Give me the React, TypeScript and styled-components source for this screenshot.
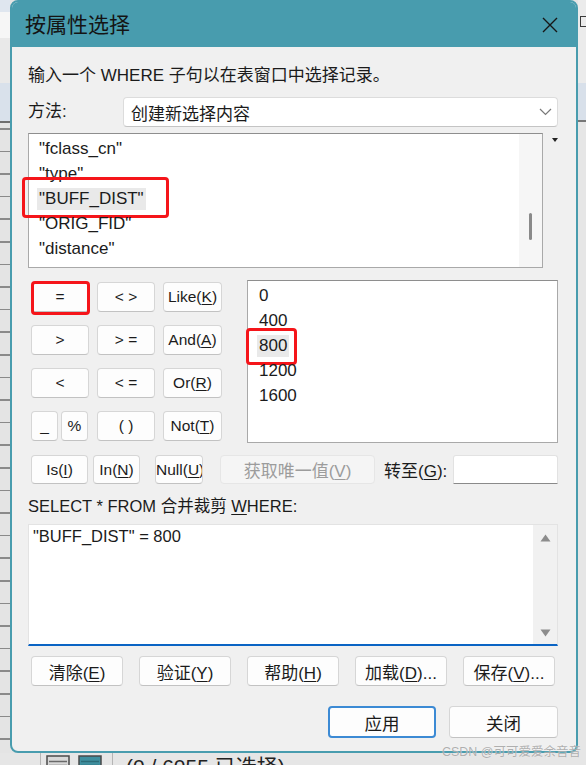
import styled, { createGlobalStyle } from "styled-components";

const sans = `"Liberation Sans", "Noto Sans CJK SC", sans-serif`;
const teal = "#489cae";

const GlobalStyle = createGlobalStyle`
  html, body {
    margin: 0;
    padding: 0;
    background: #e6e6e6;
  }
  body {
    font-family: ${sans};
    color: #1b1b1b;
  }
`;

const Desktop = styled.div`
  position: relative;
  display: grid;
  grid-template-columns: 10px 568px 8px;
  grid-template-rows: 753px 12px;
  width: 586px;
  height: 765px;
  overflow: hidden;
  background: #e4e4e4;
`;

const LeftPane = styled.div`
  background:
    linear-gradient(
      #dfe6ef 0 12px,
      #f6f6f6 12px 38px,
      #e9e9e9 38px 83px,
      #d9e1eb 83px 121px,
      #6e6e6e 121px 123px,
      transparent 123px
    ),
    repeating-linear-gradient(#e4e4e4 0 21px, #8a8a8a 21px 22.6px);
  background-position: 0 0, 0 -6px;
`;

const RightPane = styled.div`
  display: flex;
  flex-direction: column;
  background: linear-gradient(
    #ebebeb 0 83px,
    #d8e0ea 83px 120px,
    #777 120px 122px,
    #e6e6e6 122px
  );
`;

const RightIcon = styled.div`
  width: 10px;
  height: 9px;
  margin: 16px 0 0 2px;
  border: 1.5px solid #3a3a3a;
`;

const Dialog = styled.section`
  grid-column: 2;
  grid-row: 1;
  display: flex;
  flex-direction: column;
  box-sizing: border-box;
  background: #f0f0f0;
  border: 2px solid ${teal};
  border-radius: 8px;
  overflow: hidden;
`;

const TitleBar = styled.header`
  display: flex;
  align-items: center;
  justify-content: space-between;
  height: 45px;
  flex: none;
  padding: 0 18px 0 13px;
  background: ${teal};
`;

const Title = styled.h1`
  margin: 0;
  font-size: 21px;
  font-weight: 400;
  line-height: 28px;
  color: #141414;
`;

const Body = styled.div`
  display: flex;
  flex-direction: column;
  padding: 0 18px 0 16px;
`;

const Text = styled.div<{ $size?: number; $mt?: number }>`
  font-size: ${(p) => p.$size ?? 17}px;
  line-height: 24px;
  margin-top: ${(p) => p.$mt ?? 0}px;
  white-space: nowrap;
`;

const U = styled.span`
  text-decoration: underline;
  text-underline-offset: 2px;
`;

const MethodRow = styled.div`
  display: flex;
  align-items: center;
  margin-top: 9px;
  height: 30px;
`;

const MethodLabel = styled.div`
  width: 95px;
  font-size: 17px;
  line-height: 24px;
`;

const Combo = styled.div`
  flex: 1;
  display: flex;
  align-items: center;
  justify-content: space-between;
  height: 30px;
  box-sizing: border-box;
  padding: 0 5px 0 7px;
  background: #fff;
  border: 1px solid #dcdcdc;
  border-bottom-color: #c4c4c4;
  border-radius: 4px;
  font-size: 17px;
`;

const FieldRow = styled.div`
  display: flex;
  margin-top: 6px;
`;

const ListBox = styled.div<{ $w: number; $h: number }>`
  display: flex;
  width: ${(p) => p.$w}px;
  height: ${(p) => p.$h}px;
  box-sizing: border-box;
  background: #fff;
  border: 1px solid #a9a9a9;
  border-top-color: #8e8e8e;
`;

const Items = styled.div<{ $indent: number }>`
  flex: 1;
  padding: 2.5px 0 0 ${(p) => p.$indent}px;
  font-size: 17px;
`;

const Item = styled.div`
  display: flex;
  align-items: center;
  height: 25px;
`;

const ItemText = styled.span<{ $selected?: boolean }>`
  position: relative;
  padding: 0 2px;
  line-height: 22px;
  background: ${(p) => (p.$selected ? "#e9e9e9" : "transparent")};
`;

const ScrollTrack = styled.div<{ $w: number }>`
  display: flex;
  flex-direction: column;
  align-items: center;
  width: ${(p) => p.$w}px;
  background: #f6f6f6;
`;

const Thumb = styled.div`
  width: 3px;
  height: 27px;
  margin-top: 79px;
  border-radius: 2px;
  background: #8a8a8a;
`;

const TinyArrow = styled.div`
  margin: 5px 0 0 9px;
  width: 0;
  height: 0;
  border-left: 3px solid transparent;
  border-right: 3px solid transparent;
  border-top: 4px solid #222;
`;

const Marker = styled.div<{ $t: number; $r: number; $b: number; $l: number }>`
  position: absolute;
  top: ${(p) => p.$t}px;
  right: ${(p) => p.$r}px;
  bottom: ${(p) => p.$b}px;
  left: ${(p) => p.$l}px;
  border: 3.5px solid #f5151a;
  border-radius: 4px;
  pointer-events: none;
`;

const Middle = styled.div`
  display: flex;
  align-items: flex-start;
  margin-top: 12px;
  height: 163px;
`;

const OpGrid = styled.div`
  display: grid;
  grid-template-columns: 58px 58px 59px;
  grid-template-rows: repeat(4, 30px);
  column-gap: 8px;
  row-gap: 13px;
  margin: 2px 0 0 3px;
`;

const Pair = styled.div`
  display: flex;
  gap: 3px;
`;

const Btn = styled.button<{ $w?: number; $h?: number; $ml?: number; $size?: number; $primary?: boolean }>`
  position: relative;
  flex: none;
  width: ${(p) => (p.$w ? `${p.$w}px` : "100%")};
  height: ${(p) => p.$h ?? 30}px;
  margin-left: ${(p) => p.$ml ?? 0}px;
  padding: 0;
  box-sizing: border-box;
  background: #fdfdfd;
  border: ${(p) => (p.$primary ? "2px solid #3c8ad4" : "1px solid #d6d6d6")};
  border-bottom-color: ${(p) => (p.$primary ? "#3c8ad4" : "#c2c2c2")};
  border-radius: 4px;
  font-family: ${sans};
  font-size: ${(p) => p.$size ?? 15.5}px;
  color: #1b1b1b;
  white-space: nowrap;
  overflow: visible;
  cursor: default;
  &:disabled {
    background: #f5f5f5;
    border-color: #e6e6e6;
    color: #9c9c9c;
  }
`;

const Clip = styled.span`
  display: block;
  overflow: hidden;
  text-align: center;
`;

const ValueBox = styled(ListBox)`
  margin-left: auto;
`;

const ToolRow = styled.div`
  display: flex;
  align-items: center;
  margin-top: 12px;
  padding-left: 3px;
  height: 29px;
`;

const GotoLabel = styled.span`
  margin-left: 9px;
  font-size: 17px;
  white-space: nowrap;
`;

const GotoInput = styled.div`
  width: 105px;
  height: 29px;
  margin-left: auto;
  box-sizing: border-box;
  background: #fff;
  border: 1px solid #e2e2e2;
  border-bottom: 1px solid #8a8a8a;
  border-radius: 3px 3px 0 0;
`;

const SqlBox = styled.div`
  display: flex;
  height: 122px;
  margin-top: 6px;
  box-sizing: border-box;
  background: #fff;
  border: 1px solid #e3e3e3;
  border-bottom: 2px solid #0a64c4;
`;

const SqlText = styled.div`
  flex: 1;
  padding: 0 4px;
  font-size: 16.5px;
  line-height: 22px;
`;

const SqlTrack = styled(ScrollTrack)`
  justify-content: space-between;
  padding: 9px 0 7px;
  background: #f1f1f1;
`;

const ButtonRow = styled.div`
  display: flex;
  gap: 16px;
  margin-top: 10px;
  padding-left: 3px;
`;

const ActionRow = styled.div`
  display: flex;
  justify-content: flex-end;
  gap: 13px;
  margin-top: 20px;
`;

const StatusBar = styled.footer`
  grid-column: 1 / -1;
  grid-row: 2;
  display: flex;
  align-items: flex-start;
  overflow: hidden;
  background: #e6e6e6;
  font-size: 21px;
  color: #222;
`;

const Sep = styled.div<{ $ml: number }>`
  width: 1px;
  height: 12px;
  margin-left: ${(p) => p.$ml}px;
  background: #b5b5b5;
`;

const StatusIcon = styled.svg<{ $ml: number }>`
  margin: 2px 0 0 ${(p) => p.$ml}px;
  flex: none;
`;

const StatusText = styled.span`
  margin: 1px 0 0 13px;
  line-height: 26px;
  white-space: nowrap;
`;

const Watermark = styled.div`
  position: absolute;
  right: 5px;
  bottom: 5px;
  font-size: 12.5px;
  color: rgba(150, 150, 150, 0.75);
  text-shadow: 0 0 1px rgba(255, 255, 255, 0.8);
  white-space: nowrap;
`;

const fields = ["fclass_cn", "type", "BUFF_DIST", "ORIG_FID", "distance"];
const values = ["0", "400", "800", "1200", "1600"];

function Tri({ up }: { up?: boolean }) {
  return (
    <svg width="11" height="8" viewBox="0 0 11 8">
      <polygon points={up ? "5.5,0.5 10.5,7.5 0.5,7.5" : "0.5,0.5 10.5,0.5 5.5,7.5"} fill="#8c8c8c" />
    </svg>
  );
}

function TableIcon({ filled, ml }: { filled?: boolean; ml: number }) {
  return (
    <StatusIcon $ml={ml} width="24" height="24" viewBox="0 0 24 24">
      <rect x="1" y="1" width="22" height="22" fill={filled ? "#3f8f9f" : "#d8d8d8"} stroke="#4a4a4a" strokeWidth="1.5" />
      <path d="M3 6.5h18M3 10.5h18M3 14.5h18" stroke={filled ? "#2c6c78" : "#6a6a6a"} strokeWidth="1.5" />
    </StatusIcon>
  );
}

export default function App() {
  return (
    <>
      <GlobalStyle />
      <Desktop>
        <LeftPane />
        <Dialog>
          <TitleBar>
            <Title>按属性选择</Title>
            <svg width="16" height="16" viewBox="0 0 16 16">
              <path d="M1 1L15 15M15 1L1 15" stroke="#161616" strokeWidth="1.4" />
            </svg>
          </TitleBar>
          <Body>
            <Text $mt={17}>输入一个 WHERE 子句以在表窗口中选择记录。</Text>
            <MethodRow>
              <MethodLabel>方法:</MethodLabel>
              <Combo>
                创建新选择内容
                <svg width="13" height="8" viewBox="0 0 13 8">
                  <path d="M1 1L6.5 6.5L12 1" fill="none" stroke="#7a7a7a" strokeWidth="1.2" />
                </svg>
              </Combo>
            </MethodRow>
            <FieldRow>
              <ListBox $w={515} $h={135}>
                <Items $indent={8}>
                  {fields.map((f) => (
                    <Item key={f}>
                      <ItemText $selected={f === "BUFF_DIST"}>
                        "{f}"
                        {f === "BUFF_DIST" && <Marker $t={-11} $r={-23} $b={-8} $l={-15} />}
                      </ItemText>
                    </Item>
                  ))}
                </Items>
                <ScrollTrack $w={23}>
                  <Thumb />
                </ScrollTrack>
              </ListBox>
              <TinyArrow />
            </FieldRow>
            <Middle>
              <OpGrid>
                <Btn>
                  =
                  <Marker $t={-2} $r={-2} $b={-4} $l={-1} />
                </Btn>
                <Btn>&lt; &gt;</Btn>
                <Btn>
                  Like(<U>K</U>)
                </Btn>
                <Btn>&gt;</Btn>
                <Btn>&gt; =</Btn>
                <Btn>
                  And(<U>A</U>)
                </Btn>
                <Btn>&lt;</Btn>
                <Btn>&lt; =</Btn>
                <Btn>
                  Or(<U>R</U>)
                </Btn>
                <Pair>
                  <Btn $w={27}>_</Btn>
                  <Btn $w={27}>%</Btn>
                </Pair>
                <Btn>( )</Btn>
                <Btn>
                  Not(<U>T</U>)
                </Btn>
              </OpGrid>
              <ValueBox $w={311} $h={163}>
                <Items $indent={9}>
                  {values.map((v) => (
                    <Item key={v}>
                      <ItemText $selected={v === "800"}>
                        {v}
                        {v === "800" && <Marker $t={-7} $r={-8} $b={-8} $l={-11} />}
                      </ItemText>
                    </Item>
                  ))}
                </Items>
              </ValueBox>
            </Middle>
            <ToolRow>
              <Btn $w={57} $h={29}>
                Is(<U>I</U>)
              </Btn>
              <Btn $w={47} $h={29} $ml={5}>
                In(<U>N</U>)
              </Btn>
              <Btn $w={48} $h={29} $ml={15}>
                <Clip>
                  Null(<U>U</U>)
                </Clip>
              </Btn>
              <Btn $w={155} $h={29} $ml={17} $size={17} disabled>
                获取唯一值(<U>V</U>)
              </Btn>
              <GotoLabel>
                转至(<U>G</U>):
              </GotoLabel>
              <GotoInput />
            </ToolRow>
            <Text $size={16.5} $mt={10}>
              SELECT * FROM 合并裁剪 <U>W</U>HERE:
            </Text>
            <SqlBox>
              <SqlText>"BUFF_DIST" = 800</SqlText>
              <SqlTrack $w={24}>
                <Tri up />
                <Tri />
              </SqlTrack>
            </SqlBox>
            <ButtonRow>
              <Btn $w={92} $size={17}>
                清除(<U>E</U>)
              </Btn>
              <Btn $w={92} $size={17}>
                验证(<U>Y</U>)
              </Btn>
              <Btn $w={92} $size={17}>
                帮助(<U>H</U>)
              </Btn>
              <Btn $w={92} $size={17}>
                加载(<U>D</U>)...
              </Btn>
              <Btn $w={92} $size={17}>
                保存(<U>V</U>)...
              </Btn>
            </ButtonRow>
            <ActionRow>
              <Btn $w={108} $h={32} $size={17.5} $primary>
                应用
              </Btn>
              <Btn $w={109} $h={32} $size={17.5}>
                关闭
              </Btn>
            </ActionRow>
          </Body>
        </Dialog>
        <RightPane>
          <RightIcon />
        </RightPane>
        <StatusBar>
          <Sep $ml={40} />
          <TableIcon ml={5} />
          <TableIcon ml={8} filled />
          <Sep $ml={10} />
          <StatusText>(0 / 6055 已选择)</StatusText>
        </StatusBar>
        <Watermark>CSDN @可可爱爱余音音</Watermark>
      </Desktop>
    </>
  );
}
